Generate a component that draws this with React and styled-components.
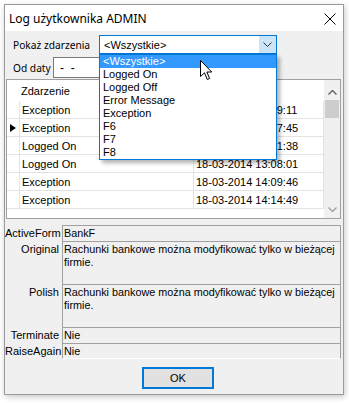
import React from 'react'
import styled, { createGlobalStyle } from 'styled-components'

const GlobalStyle = createGlobalStyle`
    html, body {
        margin: 0;
        padding: 0;
        background-color: #ffffff;
    }
    body {
        font-family: 'Liberation Sans', Arial, sans-serif;
        font-size: 11px;
        color: #000000;
    }
`

const events = ['<Wszystkie>', 'Logged On', 'Logged Off', 'Error Message', 'Exception', 'F6', 'F7', 'F8']

const rows = [
    { name: 'Exception', date: '18-03-2014 12:39:11' },
    { name: 'Exception', date: '18-03-2014 12:47:45', current: true },
    { name: 'Logged On', date: '18-03-2014 12:51:38' },
    { name: 'Logged On', date: '18-03-2014 13:08:01' },
    { name: 'Exception', date: '18-03-2014 14:09:46' },
    { name: 'Exception', date: '18-03-2014 14:14:49' },
]

const details = [
    { label: 'ActiveForm', value: 'BankF', tall: false },
    { label: 'Original', value: 'Rachunki bankowe można modyfikować tylko w bieżącej firmie.', tall: true },
    { label: 'Polish', value: 'Rachunki bankowe można modyfikować tylko w bieżącej firmie.', tall: true },
    { label: 'Terminate', value: 'Nie', tall: false },
    { label: 'RaiseAgain', value: 'Nie', tall: false },
]

export default function App() {
    return (
        <>
            <GlobalStyle />
            <Page>
                <Window>
                    <TitleBar>
                        <Title>Log użytkownika ADMIN</Title>
                        <CloseButton>
                            <svg width="12" height="12" viewBox="0 0 12 12">
                                <path d="M0.5 0.5 L11.5 11.5 M11.5 0.5 L0.5 11.5" stroke="#000" strokeWidth="1" fill="none" />
                            </svg>
                        </CloseButton>
                    </TitleBar>
                    <Body>
                        <FilterRow>
                            <FieldLabel $width={86}>Pokaż zdarzenia</FieldLabel>
                            <ComboHolder>
                                <Combo>
                                    <ComboText>&lt;Wszystkie&gt;</ComboText>
                                    <DropButton>
                                        <svg width="9" height="5" viewBox="0 0 9 5">
                                            <path d="M0.5 0.5 L4.5 4.5 L8.5 0.5" stroke="#333" strokeWidth="1" fill="none" />
                                        </svg>
                                    </DropButton>
                                </Combo>
                                <DropList>
                                    {events.map((e, i) => (
                                        <DropItem key={e} $selected={i === 0}>{e}</DropItem>
                                    ))}
                                </DropList>
                                <Pointer width="13" height="21" viewBox="0 0 13 21">
                                    <path d="M0.5 0.5 L0.5 16.5 L4.5 12.8 L7.3 19.5 L9.6 18.5 L6.9 12 L11.8 12 Z" fill="#fff" stroke="#000" strokeWidth="1" strokeLinejoin="miter" />
                                </Pointer>
                            </ComboHolder>
                        </FilterRow>
                        <DateRow>
                            <FieldLabel $width={40}>Od daty</FieldLabel>
                            <DateInput>-&nbsp;&nbsp;-</DateInput>
                        </DateRow>
                        <Grid>
                            <GridBody>
                                <HeaderRow>
                                    <span />
                                    <HeaderCell>Zdarzenie</HeaderCell>
                                    <HeaderCell>Data</HeaderCell>
                                </HeaderRow>
                                {rows.map((r, i) => (
                                    <DataRow key={i}>
                                        <IndicatorCell>{r.current && <RowMarker />}</IndicatorCell>
                                        <Cell>{r.name}</Cell>
                                        <Cell>{r.date}</Cell>
                                    </DataRow>
                                ))}
                            </GridBody>
                            <ScrollBar>
                                <ScrollArrow $top>
                                    <svg width="9" height="5" viewBox="0 0 9 5">
                                        <path d="M0.5 4.5 L4.5 0.5 L8.5 4.5" stroke="#606060" strokeWidth="1.4" fill="none" />
                                    </svg>
                                </ScrollArrow>
                                <Thumb />
                                <ScrollTrack />
                                <ScrollArrow>
                                    <svg width="9" height="5" viewBox="0 0 9 5">
                                        <path d="M0.5 0.5 L4.5 4.5 L8.5 0.5" stroke="#a0a0a0" strokeWidth="1.4" fill="none" />
                                    </svg>
                                </ScrollArrow>
                            </ScrollBar>
                        </Grid>
                        <Details>
                            {details.map((d) => (
                                <DetailRow key={d.label} $tall={d.tall}>
                                    <DetailLabel>{d.label}</DetailLabel>
                                    <DetailValue>{d.value}</DetailValue>
                                </DetailRow>
                            ))}
                        </Details>
                        <Footer>
                            <OkButton>OK</OkButton>
                        </Footer>
                    </Body>
                </Window>
            </Page>
        </>
    )
}

const Page = styled.div`
    width: 349px;
    height: 403px;
    padding: 4px 0 0 4px;
    box-sizing: border-box;
    overflow: hidden;
`

const Window = styled.div`
    width: 340px;
    height: 391px;
    box-sizing: border-box;
    border: 1px solid #9a9a9a;
    background-color: #f0f0f0;
    box-shadow: 1px 2px 6px rgba(0, 0, 0, 0.22);
    display: flex;
    flex-direction: column;
`

const TitleBar = styled.div`
    height: 26px;
    background-color: #ffffff;
    display: flex;
    align-items: center;
    justify-content: space-between;
    padding: 0 7px 0 4px;
`

const Title = styled.div`
    font-family: 'Noto Sans', sans-serif;
    font-size: 12px;
    color: #000;
`

const CloseButton = styled.div`
    width: 12px;
    height: 12px;
    display: flex;
    margin-top: 1px;
`

const Body = styled.div`
    flex: 1;
    display: flex;
    flex-direction: column;
    position: relative;
`

const FilterRow = styled.div`
    margin-top: 4px;
    height: 19px;
    padding-left: 8px;
    display: flex;
    align-items: center;
`

const FieldLabel = styled.div`
    width: ${(p) => p.$width}px;
    font-family: 'Noto Sans', sans-serif;
    font-size: 10.2px;
    white-space: nowrap;
`

const ComboHolder = styled.div`
    position: relative;
    width: 178px;
    height: 19px;
    z-index: 2;
`

const Combo = styled.div`
    height: 19px;
    box-sizing: border-box;
    border: 1px solid #0078d7;
    background-color: #ffffff;
    display: flex;
    align-items: stretch;
`

const ComboText = styled.div`
    flex: 1;
    padding-left: 4px;
    display: flex;
    align-items: center;
    font-size: 11px;
`

const DropButton = styled.div`
    width: 17px;
    background-color: #cce4f7;
    display: flex;
    align-items: center;
    justify-content: center;
`

const DropList = styled.div`
    position: absolute;
    left: 0;
    top: 19px;
    width: 178px;
    box-sizing: border-box;
    border: 1px solid #0078d7;
    background-color: #ffffff;
    box-shadow: 3px 3px 4px rgba(0, 0, 0, 0.3);
`

const DropItem = styled.div`
    height: 13px;
    line-height: 13px;
    padding-left: 3px;
    font-size: 11px;
    color: ${(p) => (p.$selected ? '#ffffff' : '#000000')};
    background-color: ${(p) => (p.$selected ? '#3399ff' : 'transparent')};
`

const Pointer = styled.svg`
    position: absolute;
    left: 101px;
    top: 25px;
`

const DateRow = styled.div`
    margin-top: 3px;
    height: 21px;
    padding-left: 8px;
    display: flex;
    align-items: center;
`

const DateInput = styled.div`
    width: 110px;
    height: 21px;
    box-sizing: border-box;
    border: 1px solid #7a7a7a;
    background-color: #ffffff;
    padding-left: 6px;
    display: flex;
    align-items: center;
    font-size: 12px;
`

const Grid = styled.div`
    margin: 1px 2px 0 1px;
    height: 140px;
    box-sizing: border-box;
    border: 1px solid #a0a0a0;
    background-color: #ffffff;
    display: flex;
`

const GridBody = styled.div`
    flex: 1;
    display: flex;
    flex-direction: column;
`

const HeaderRow = styled.div`
    height: 21px;
    display: grid;
    grid-template-columns: 13px 174px 1fr;
    align-items: center;
`

const HeaderCell = styled.div`
    padding-left: 1px;
    font-size: 11px;
`

const DataRow = styled.div`
    height: 18px;
    box-sizing: border-box;
    border-bottom: 1px solid #e3e3e3;
    display: grid;
    grid-template-columns: 13px 174px 1fr;
`

const IndicatorCell = styled.div`
    border-right: 1px solid #e3e3e3;
    display: flex;
    align-items: center;
    justify-content: center;
`

const RowMarker = styled.div`
    width: 0;
    height: 0;
    border-top: 4px solid transparent;
    border-bottom: 4px solid transparent;
    border-left: 6px solid #000;
`

const Cell = styled.div`
    padding-left: 2px;
    border-right: 1px solid #e3e3e3;
    display: flex;
    align-items: center;
    white-space: nowrap;
    font-size: 11px;
`

const ScrollBar = styled.div`
    width: 16px;
    background-color: #f0f0f0;
    display: flex;
    flex-direction: column;
`

const ScrollArrow = styled.div`
    height: ${(p) => (p.$top ? 20 : 17)}px;
    display: flex;
    align-items: ${(p) => (p.$top ? 'flex-end' : 'center')};
    padding-bottom: ${(p) => (p.$top ? 5 : 0)}px;
    box-sizing: border-box;
    justify-content: center;
`

const Thumb = styled.div`
    height: 18px;
    margin: 0 1px;
    background-color: #cdcdcd;
`

const ScrollTrack = styled.div`
    flex: 1;
`

const Details = styled.div`
    margin: 6px 2px 0 0;
    display: flex;
    flex-direction: column;
`

const DetailRow = styled.div`
    height: ${(p) => (p.$tall ? 43 : 16)}px;
    display: grid;
    grid-template-columns: 57px 1fr;
    &:last-child > div:last-child {
        border-bottom: 1px solid #ffffff;
    }
`

const DetailLabel = styled.div`
    text-align: right;
    padding: 2px 3px 0 0;
    line-height: 13px;
    font-size: 11px;
`

const DetailValue = styled.div`
    border-top: 1px solid #a0a0a0;
    border-left: 1px solid #a0a0a0;
    border-right: 1px solid #a0a0a0;
    padding: 1px 0 0 1px;
    line-height: 13px;
    font-size: 10.8px;
`

const Footer = styled.div`
    margin-top: 8px;
    padding-left: 137px;
    display: flex;
`

const OkButton = styled.button`
    width: 72px;
    height: 22px;
    box-sizing: border-box;
    border: 2px solid #0078d7;
    background-color: #e1e1e1;
    font-family: 'Liberation Sans', Arial, sans-serif;
    font-size: 11px;
    color: #000;
    padding: 0;
`
